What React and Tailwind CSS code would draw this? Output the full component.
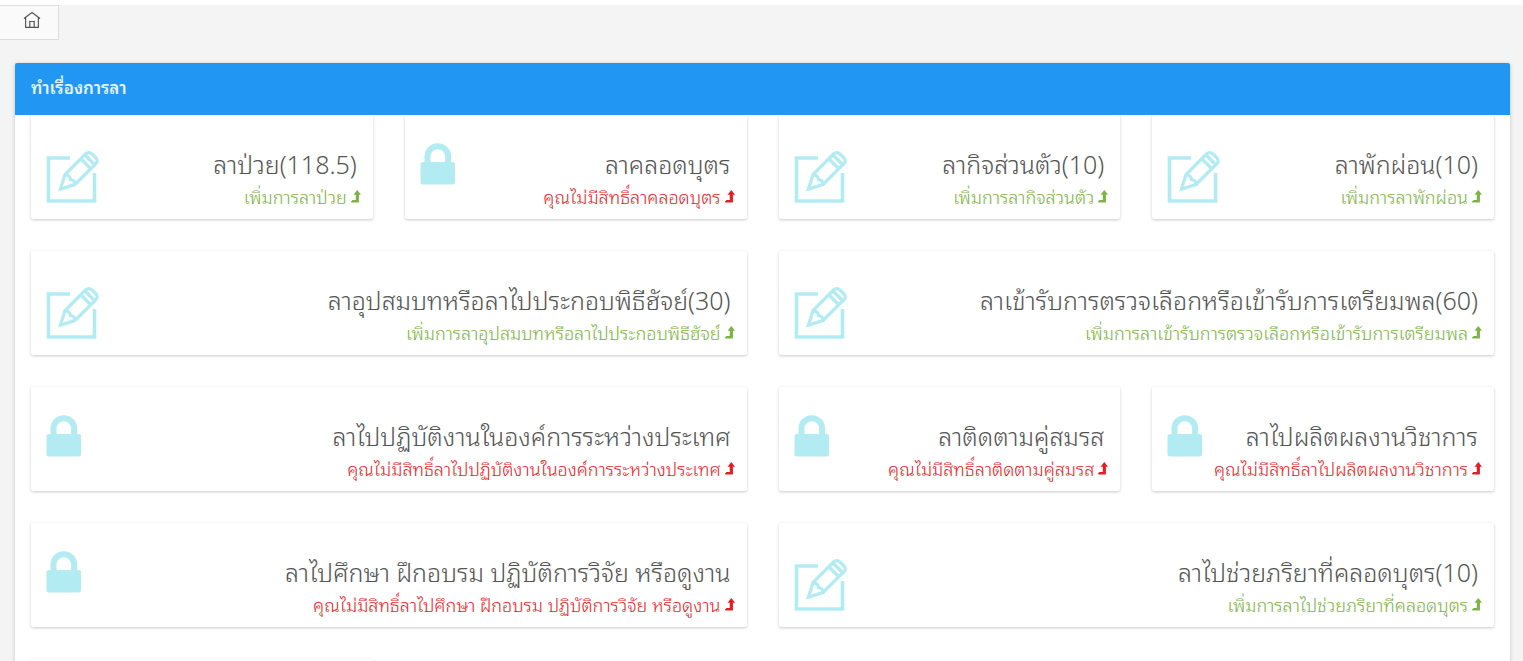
import React from "react";

const leaveTypes = [
  { id: 1, title: "ลาป่วย(118.5)", action: "เพิ่มการลาป่วย", allowed: true },
  { id: 2, title: "ลาคลอดบุตร", action: "คุณไม่มีสิทธิ์ลาคลอดบุตร", allowed: false },
  { id: 3, title: "ลากิจส่วนตัว(10)", action: "เพิ่มการลากิจส่วนตัว", allowed: true },
  { id: 4, title: "ลาพักผ่อน(10)", action: "เพิ่มการลาพักผ่อน", allowed: true },
  {
    id: 5,
    title: "ลาอุปสมบทหรือลาไปประกอบพิธีฮัจย์(30)",
    action: "เพิ่มการลาอุปสมบทหรือลาไปประกอบพิธีฮัจย์",
    allowed: true,
    wide: true,
  },
  {
    id: 6,
    title: "ลาเข้ารับการตรวจเลือกหรือเข้ารับการเตรียมพล(60)",
    action: "เพิ่มการลาเข้ารับการตรวจเลือกหรือเข้ารับการเตรียมพล",
    allowed: true,
    wide: true,
  },
  {
    id: 7,
    title: "ลาไปปฏิบัติงานในองค์การระหว่างประเทศ",
    action: "คุณไม่มีสิทธิ์ลาไปปฏิบัติงานในองค์การระหว่างประเทศ",
    allowed: false,
    wide: true,
  },
  { id: 8, title: "ลาติดตามคู่สมรส", action: "คุณไม่มีสิทธิ์ลาติดตามคู่สมรส", allowed: false },
  { id: 9, title: "ลาไปผลิตผลงานวิชาการ", action: "คุณไม่มีสิทธิ์ลาไปผลิตผลงานวิชาการ", allowed: false },
  {
    id: 10,
    title: "ลาไปศึกษา ฝึกอบรม ปฏิบัติการวิจัย หรือดูงาน",
    action: "คุณไม่มีสิทธิ์ลาไปศึกษา ฝึกอบรม ปฏิบัติการวิจัย หรือดูงาน",
    allowed: false,
    wide: true,
  },
  {
    id: 11,
    title: "ลาไปช่วยภริยาที่คลอดบุตร(10)",
    action: "เพิ่มการลาไปช่วยภริยาที่คลอดบุตร",
    allowed: true,
    wide: true,
  },
];

const HomeIcon = () => (
  <svg width="18" height="18" viewBox="0 0 18 18" fill="none" stroke="#555" strokeWidth="1.2">
    <path d="M1 7.5 9 1.5 17 7.5M2.6 6.5V16.4H15.4V6.5M6.8 16.4V10.5H11.2V16.4" />
  </svg>
);

const EditIcon = () => (
  <svg width="54" height="54" viewBox="0 0 54 54" fill="none" stroke="#b2ebf2">
    <path d="M24 8H2.5V51H48.5V23" strokeWidth="3.6" />
    <path
      d="M14.5 39 19 24.5 39.5 4Q43 1 46.5 4.5L49.5 7.5Q53 11 49.5 14L29 34.5ZM19 25Q24 25 24.5 29.5Q29 30 28.5 34M35 9 45 19M39 5 49 15"
      strokeWidth="3.2"
    />
  </svg>
);

const LockIcon = () => (
  <svg width="36" height="42" viewBox="0 0 36 42">
    <rect x="0.5" y="19" width="34.5" height="22.5" rx="2.5" fill="#b2ebf2" />
    <path d="M7.5 20V13.5a10.3 10.3 0 0 1 20.6 0V20" fill="none" stroke="#b2ebf2" strokeWidth="6" />
  </svg>
);

const LevelUpIcon = () => (
  <svg width="10" height="13" viewBox="0 0 10 13" fill="currentColor" className="shrink-0">
    <path d="M6.3 0 10 4.8H7.9V12.5H.6L0 11.8V11.5L1.5 10H4.8V4.8H2.6Z" />
  </svg>
);

const LeaveCard = ({ title, action, allowed, wide }) => (
  <div
    className={`flex h-[104px] items-start justify-between rounded-xs bg-white pl-[15px] shadow-[0_1px_3px_rgba(0,0,0,0.22)] ${
      wide ? "col-span-2" : ""
    }`}
  >
    <div className={allowed ? "pt-[35px]" : "pt-7"}>{allowed ? <EditIcon /> : <LockIcon />}</div>
    <div className="flex flex-col items-end pt-7 whitespace-nowrap">
      <h2 className="pr-4 text-[25px] leading-10 font-light text-[#555]">{title}</h2>
      <a
        href="#"
        className={`flex items-center gap-1 pr-3 text-lg leading-[26px] font-light ${
          allowed ? "text-[#7cb342]" : "text-[#e51c23]"
        }`}
      >
        {action}
        <LevelUpIcon />
      </a>
    </div>
  </div>
);

const App = () => {
  return (
    <div className="h-screen overflow-hidden border-t-5 border-white bg-[#f4f4f4] font-['Noto_Sans_Thai_Looped','Noto_Sans_Thai','Noto_Sans',sans-serif]">
      <nav className="flex">
        <a
          href="#"
          aria-label="หน้าแรก"
          className="flex h-[35px] w-[59px] justify-end border border-l-0 border-[#ddd] bg-[#fafafa] pt-[5px] pr-[17px]"
        >
          <HomeIcon />
        </a>
      </nav>

      <main className="mt-[23px] mr-[13px] ml-[15px] rounded-xs bg-white shadow-[0_1px_4px_rgba(0,0,0,0.2)]">
        <header className="flex h-[52px] items-center rounded-t-xs bg-[#2196f3] px-4 pb-1">
          <h1 className="text-[17px] font-semibold text-[#e3f2fd]">ทำเรื่องการลา</h1>
        </header>

        <div className="grid grid-cols-4 gap-8 overflow-hidden px-4 pb-8">
          {leaveTypes.map((leave) => (
            <LeaveCard key={leave.id} {...leave} />
          ))}
          <div className="h-[104px] rounded-xs bg-white shadow-[0_1px_3px_rgba(0,0,0,0.22)]" />
        </div>
      </main>
    </div>
  );
};

export default App;
